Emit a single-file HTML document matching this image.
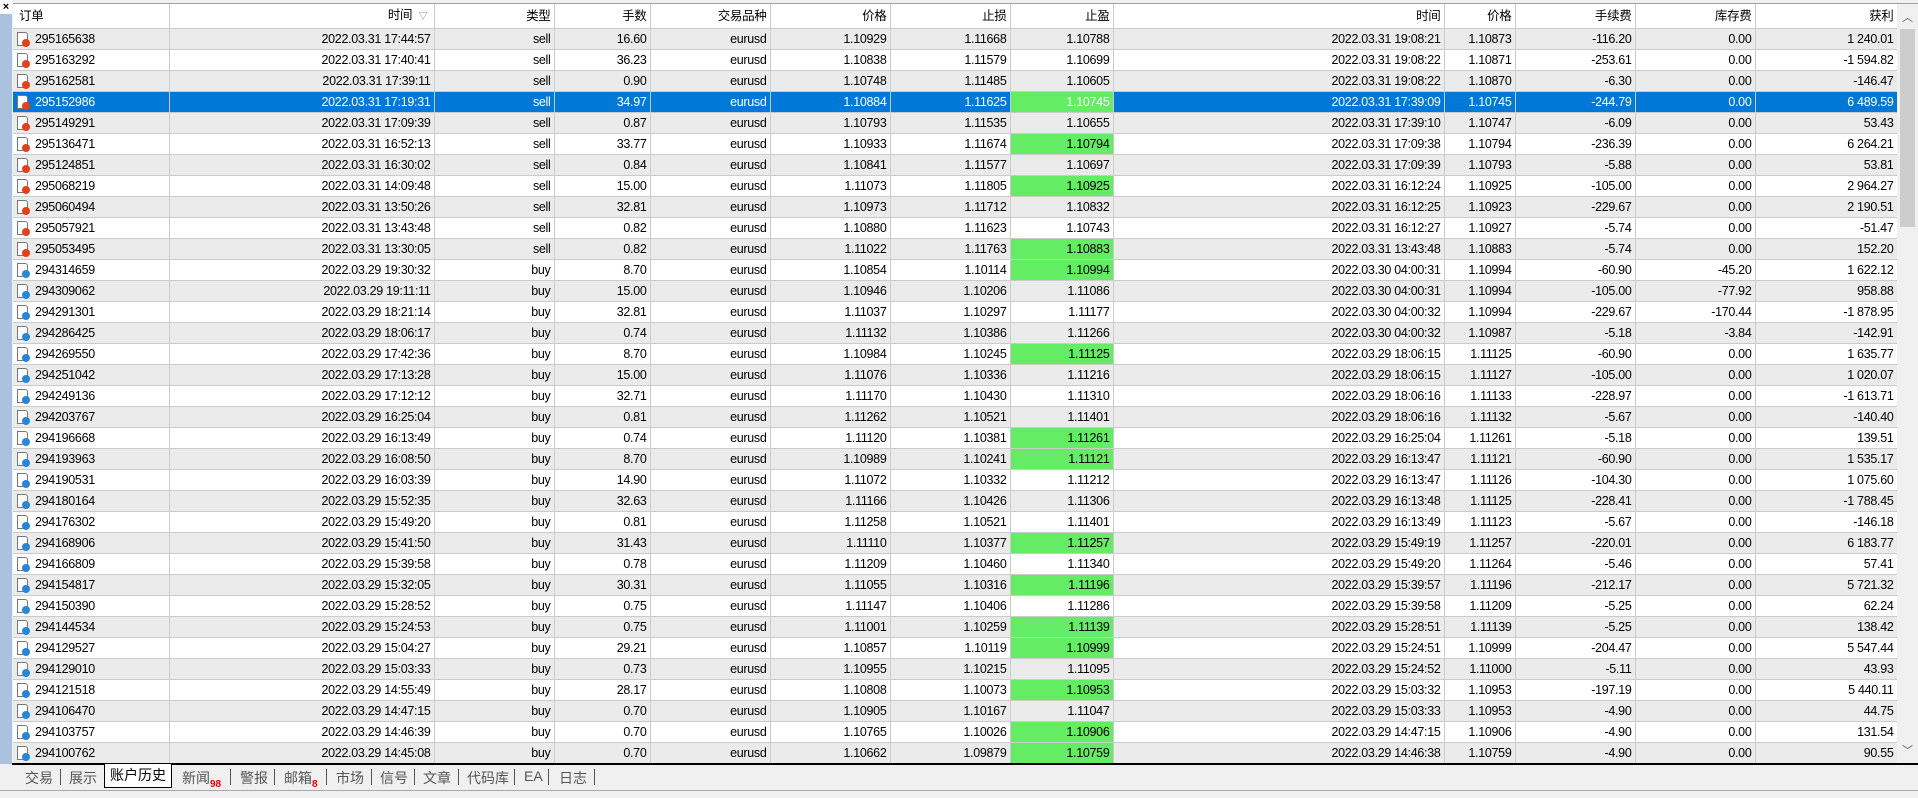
<!DOCTYPE html>
<html><head><meta charset="utf-8"><style>
*{margin:0;padding:0;box-sizing:border-box}
body{width:1918px;height:798px;background:#f0f0f0;position:relative;overflow:hidden;font-family:"Liberation Sans","Noto Sans CJK SC",sans-serif;font-size:12.5px;letter-spacing:-0.3px;color:#000}
#strip{position:absolute;left:0;top:0;width:12px;height:764px;background:#abc2de}
#x{position:absolute;left:0;top:0;width:12px;height:14px;background:#fff;font-size:11px;font-weight:bold;text-align:center;line-height:14px;letter-spacing:0}
#wrap{position:absolute;left:13px;top:3px;width:1884px;height:761px;background:#fff;border-top:1px solid #a0a0a0;overflow:hidden}
table{border-collapse:collapse;table-layout:fixed;width:1884px}
td,th{height:21px;padding:0 3px 0 0;border-right:1px solid #cbcbcb;border-bottom:1px solid #cbcbcb;text-align:right;white-space:nowrap;overflow:hidden;font-weight:normal;line-height:20px}
th{height:24px;background:#fff;line-height:23px}
tr:nth-child(even) td{background:#ebebeb}
tr.sel td{background:#0078d7;color:#fff}
td.g{background:#64ec64!important;color:#000}
td.o{text-align:left;padding-left:22px;position:relative}
th.o{text-align:left;padding-left:6px}
td.o i{position:absolute;left:4px;top:3px;width:11px;height:14px;border:1px solid #777;background:#fff;border-radius:0 3px 0 0}
td.o i:after{content:"";position:absolute;left:4px;top:6px;width:8px;height:8px;border-radius:50%;background:#e4401c}
td.o i.b:after{background:#2a84d8}
#sb{position:absolute;left:1897px;top:3px;width:21px;height:761px;background:#f0f0f0;border-top:1px solid #a0a0a0}
#thumb{position:absolute;left:3px;top:25px;width:15px;height:198px;background:#cdcdcd}
#sb span{position:absolute;left:0;width:21px;text-align:center;font-size:11px;color:#555;letter-spacing:0}
#bl{position:absolute;left:12px;top:763px;width:1906px;height:2px;background:#000}
#tabs{position:absolute;left:0;top:765px;height:22px;width:1000px;font-size:14px;color:#555;letter-spacing:0;white-space:nowrap}
#tabs span{position:absolute;top:3px}
#tabs b{position:absolute;top:4px;width:1px;height:16px;background:#555}
#act{position:absolute;left:104px;top:-1px!important;width:68px;height:24px;border:1px solid #000;border-top:none;background:#fff;color:#000;text-align:center;line-height:22px}
#tabs sub{color:#e00;font-size:10px;font-weight:bold}
#line2{position:absolute;left:0;top:790px;width:1918px;height:1px;background:#a8a8a8}
</style></head><body>
<div id="strip"></div><div id="x">×</div>
<div id="wrap"><table>
<colgroup><col style="width:156px"><col style="width:265px"><col style="width:120px"><col style="width:96px"><col style="width:120px"><col style="width:120px"><col style="width:120px"><col style="width:103px"><col style="width:331px"><col style="width:71px"><col style="width:120px"><col style="width:120px"><col style="width:142px"></colgroup>
<tr><th class="o">订单</th><th>时间 &nbsp;<span style="font-size:9px;color:#777">▽</span>&nbsp;</th><th>类型</th><th>手数</th><th>交易品种</th><th>价格</th><th>止损</th><th>止盈</th><th>时间</th><th>价格</th><th>手续费</th><th>库存费</th><th>获利</th></tr>
<tr><td class="o"><i></i>295165638</td><td>2022.03.31 17:44:57</td><td>sell</td><td>16.60</td><td>eurusd</td><td>1.10929</td><td>1.11668</td><td>1.10788</td><td>2022.03.31 19:08:21</td><td>1.10873</td><td>-116.20</td><td>0.00</td><td>1 240.01</td></tr>
<tr><td class="o"><i></i>295163292</td><td>2022.03.31 17:40:41</td><td>sell</td><td>36.23</td><td>eurusd</td><td>1.10838</td><td>1.11579</td><td>1.10699</td><td>2022.03.31 19:08:22</td><td>1.10871</td><td>-253.61</td><td>0.00</td><td>-1 594.82</td></tr>
<tr><td class="o"><i></i>295162581</td><td>2022.03.31 17:39:11</td><td>sell</td><td>0.90</td><td>eurusd</td><td>1.10748</td><td>1.11485</td><td>1.10605</td><td>2022.03.31 19:08:22</td><td>1.10870</td><td>-6.30</td><td>0.00</td><td>-146.47</td></tr>
<tr class="sel"><td class="o"><i></i>295152986</td><td>2022.03.31 17:19:31</td><td>sell</td><td>34.97</td><td>eurusd</td><td>1.10884</td><td>1.11625</td><td class="g">1.10745</td><td>2022.03.31 17:39:09</td><td>1.10745</td><td>-244.79</td><td>0.00</td><td>6 489.59</td></tr>
<tr><td class="o"><i></i>295149291</td><td>2022.03.31 17:09:39</td><td>sell</td><td>0.87</td><td>eurusd</td><td>1.10793</td><td>1.11535</td><td>1.10655</td><td>2022.03.31 17:39:10</td><td>1.10747</td><td>-6.09</td><td>0.00</td><td>53.43</td></tr>
<tr><td class="o"><i></i>295136471</td><td>2022.03.31 16:52:13</td><td>sell</td><td>33.77</td><td>eurusd</td><td>1.10933</td><td>1.11674</td><td class="g">1.10794</td><td>2022.03.31 17:09:38</td><td>1.10794</td><td>-236.39</td><td>0.00</td><td>6 264.21</td></tr>
<tr><td class="o"><i></i>295124851</td><td>2022.03.31 16:30:02</td><td>sell</td><td>0.84</td><td>eurusd</td><td>1.10841</td><td>1.11577</td><td>1.10697</td><td>2022.03.31 17:09:39</td><td>1.10793</td><td>-5.88</td><td>0.00</td><td>53.81</td></tr>
<tr><td class="o"><i></i>295068219</td><td>2022.03.31 14:09:48</td><td>sell</td><td>15.00</td><td>eurusd</td><td>1.11073</td><td>1.11805</td><td class="g">1.10925</td><td>2022.03.31 16:12:24</td><td>1.10925</td><td>-105.00</td><td>0.00</td><td>2 964.27</td></tr>
<tr><td class="o"><i></i>295060494</td><td>2022.03.31 13:50:26</td><td>sell</td><td>32.81</td><td>eurusd</td><td>1.10973</td><td>1.11712</td><td>1.10832</td><td>2022.03.31 16:12:25</td><td>1.10923</td><td>-229.67</td><td>0.00</td><td>2 190.51</td></tr>
<tr><td class="o"><i></i>295057921</td><td>2022.03.31 13:43:48</td><td>sell</td><td>0.82</td><td>eurusd</td><td>1.10880</td><td>1.11623</td><td>1.10743</td><td>2022.03.31 16:12:27</td><td>1.10927</td><td>-5.74</td><td>0.00</td><td>-51.47</td></tr>
<tr><td class="o"><i></i>295053495</td><td>2022.03.31 13:30:05</td><td>sell</td><td>0.82</td><td>eurusd</td><td>1.11022</td><td>1.11763</td><td class="g">1.10883</td><td>2022.03.31 13:43:48</td><td>1.10883</td><td>-5.74</td><td>0.00</td><td>152.20</td></tr>
<tr><td class="o"><i class="b"></i>294314659</td><td>2022.03.29 19:30:32</td><td>buy</td><td>8.70</td><td>eurusd</td><td>1.10854</td><td>1.10114</td><td class="g">1.10994</td><td>2022.03.30 04:00:31</td><td>1.10994</td><td>-60.90</td><td>-45.20</td><td>1 622.12</td></tr>
<tr><td class="o"><i class="b"></i>294309062</td><td>2022.03.29 19:11:11</td><td>buy</td><td>15.00</td><td>eurusd</td><td>1.10946</td><td>1.10206</td><td>1.11086</td><td>2022.03.30 04:00:31</td><td>1.10994</td><td>-105.00</td><td>-77.92</td><td>958.88</td></tr>
<tr><td class="o"><i class="b"></i>294291301</td><td>2022.03.29 18:21:14</td><td>buy</td><td>32.81</td><td>eurusd</td><td>1.11037</td><td>1.10297</td><td>1.11177</td><td>2022.03.30 04:00:32</td><td>1.10994</td><td>-229.67</td><td>-170.44</td><td>-1 878.95</td></tr>
<tr><td class="o"><i class="b"></i>294286425</td><td>2022.03.29 18:06:17</td><td>buy</td><td>0.74</td><td>eurusd</td><td>1.11132</td><td>1.10386</td><td>1.11266</td><td>2022.03.30 04:00:32</td><td>1.10987</td><td>-5.18</td><td>-3.84</td><td>-142.91</td></tr>
<tr><td class="o"><i class="b"></i>294269550</td><td>2022.03.29 17:42:36</td><td>buy</td><td>8.70</td><td>eurusd</td><td>1.10984</td><td>1.10245</td><td class="g">1.11125</td><td>2022.03.29 18:06:15</td><td>1.11125</td><td>-60.90</td><td>0.00</td><td>1 635.77</td></tr>
<tr><td class="o"><i class="b"></i>294251042</td><td>2022.03.29 17:13:28</td><td>buy</td><td>15.00</td><td>eurusd</td><td>1.11076</td><td>1.10336</td><td>1.11216</td><td>2022.03.29 18:06:15</td><td>1.11127</td><td>-105.00</td><td>0.00</td><td>1 020.07</td></tr>
<tr><td class="o"><i class="b"></i>294249136</td><td>2022.03.29 17:12:12</td><td>buy</td><td>32.71</td><td>eurusd</td><td>1.11170</td><td>1.10430</td><td>1.11310</td><td>2022.03.29 18:06:16</td><td>1.11133</td><td>-228.97</td><td>0.00</td><td>-1 613.71</td></tr>
<tr><td class="o"><i class="b"></i>294203767</td><td>2022.03.29 16:25:04</td><td>buy</td><td>0.81</td><td>eurusd</td><td>1.11262</td><td>1.10521</td><td>1.11401</td><td>2022.03.29 18:06:16</td><td>1.11132</td><td>-5.67</td><td>0.00</td><td>-140.40</td></tr>
<tr><td class="o"><i class="b"></i>294196668</td><td>2022.03.29 16:13:49</td><td>buy</td><td>0.74</td><td>eurusd</td><td>1.11120</td><td>1.10381</td><td class="g">1.11261</td><td>2022.03.29 16:25:04</td><td>1.11261</td><td>-5.18</td><td>0.00</td><td>139.51</td></tr>
<tr><td class="o"><i class="b"></i>294193963</td><td>2022.03.29 16:08:50</td><td>buy</td><td>8.70</td><td>eurusd</td><td>1.10989</td><td>1.10241</td><td class="g">1.11121</td><td>2022.03.29 16:13:47</td><td>1.11121</td><td>-60.90</td><td>0.00</td><td>1 535.17</td></tr>
<tr><td class="o"><i class="b"></i>294190531</td><td>2022.03.29 16:03:39</td><td>buy</td><td>14.90</td><td>eurusd</td><td>1.11072</td><td>1.10332</td><td>1.11212</td><td>2022.03.29 16:13:47</td><td>1.11126</td><td>-104.30</td><td>0.00</td><td>1 075.60</td></tr>
<tr><td class="o"><i class="b"></i>294180164</td><td>2022.03.29 15:52:35</td><td>buy</td><td>32.63</td><td>eurusd</td><td>1.11166</td><td>1.10426</td><td>1.11306</td><td>2022.03.29 16:13:48</td><td>1.11125</td><td>-228.41</td><td>0.00</td><td>-1 788.45</td></tr>
<tr><td class="o"><i class="b"></i>294176302</td><td>2022.03.29 15:49:20</td><td>buy</td><td>0.81</td><td>eurusd</td><td>1.11258</td><td>1.10521</td><td>1.11401</td><td>2022.03.29 16:13:49</td><td>1.11123</td><td>-5.67</td><td>0.00</td><td>-146.18</td></tr>
<tr><td class="o"><i class="b"></i>294168906</td><td>2022.03.29 15:41:50</td><td>buy</td><td>31.43</td><td>eurusd</td><td>1.11110</td><td>1.10377</td><td class="g">1.11257</td><td>2022.03.29 15:49:19</td><td>1.11257</td><td>-220.01</td><td>0.00</td><td>6 183.77</td></tr>
<tr><td class="o"><i class="b"></i>294166809</td><td>2022.03.29 15:39:58</td><td>buy</td><td>0.78</td><td>eurusd</td><td>1.11209</td><td>1.10460</td><td>1.11340</td><td>2022.03.29 15:49:20</td><td>1.11264</td><td>-5.46</td><td>0.00</td><td>57.41</td></tr>
<tr><td class="o"><i class="b"></i>294154817</td><td>2022.03.29 15:32:05</td><td>buy</td><td>30.31</td><td>eurusd</td><td>1.11055</td><td>1.10316</td><td class="g">1.11196</td><td>2022.03.29 15:39:57</td><td>1.11196</td><td>-212.17</td><td>0.00</td><td>5 721.32</td></tr>
<tr><td class="o"><i class="b"></i>294150390</td><td>2022.03.29 15:28:52</td><td>buy</td><td>0.75</td><td>eurusd</td><td>1.11147</td><td>1.10406</td><td>1.11286</td><td>2022.03.29 15:39:58</td><td>1.11209</td><td>-5.25</td><td>0.00</td><td>62.24</td></tr>
<tr><td class="o"><i class="b"></i>294144534</td><td>2022.03.29 15:24:53</td><td>buy</td><td>0.75</td><td>eurusd</td><td>1.11001</td><td>1.10259</td><td class="g">1.11139</td><td>2022.03.29 15:28:51</td><td>1.11139</td><td>-5.25</td><td>0.00</td><td>138.42</td></tr>
<tr><td class="o"><i class="b"></i>294129527</td><td>2022.03.29 15:04:27</td><td>buy</td><td>29.21</td><td>eurusd</td><td>1.10857</td><td>1.10119</td><td class="g">1.10999</td><td>2022.03.29 15:24:51</td><td>1.10999</td><td>-204.47</td><td>0.00</td><td>5 547.44</td></tr>
<tr><td class="o"><i class="b"></i>294129010</td><td>2022.03.29 15:03:33</td><td>buy</td><td>0.73</td><td>eurusd</td><td>1.10955</td><td>1.10215</td><td>1.11095</td><td>2022.03.29 15:24:52</td><td>1.11000</td><td>-5.11</td><td>0.00</td><td>43.93</td></tr>
<tr><td class="o"><i class="b"></i>294121518</td><td>2022.03.29 14:55:49</td><td>buy</td><td>28.17</td><td>eurusd</td><td>1.10808</td><td>1.10073</td><td class="g">1.10953</td><td>2022.03.29 15:03:32</td><td>1.10953</td><td>-197.19</td><td>0.00</td><td>5 440.11</td></tr>
<tr><td class="o"><i class="b"></i>294106470</td><td>2022.03.29 14:47:15</td><td>buy</td><td>0.70</td><td>eurusd</td><td>1.10905</td><td>1.10167</td><td>1.11047</td><td>2022.03.29 15:03:33</td><td>1.10953</td><td>-4.90</td><td>0.00</td><td>44.75</td></tr>
<tr><td class="o"><i class="b"></i>294103757</td><td>2022.03.29 14:46:39</td><td>buy</td><td>0.70</td><td>eurusd</td><td>1.10765</td><td>1.10026</td><td class="g">1.10906</td><td>2022.03.29 14:47:15</td><td>1.10906</td><td>-4.90</td><td>0.00</td><td>131.54</td></tr>
<tr><td class="o"><i class="b"></i>294100762</td><td>2022.03.29 14:45:08</td><td>buy</td><td>0.70</td><td>eurusd</td><td>1.10662</td><td>1.09879</td><td class="g">1.10759</td><td>2022.03.29 14:46:38</td><td>1.10759</td><td>-4.90</td><td>0.00</td><td>90.55</td></tr>
</table></div>
<div id="sb"><span style="top:5px">︿</span><div id="thumb"></div><span style="top:738px">﹀</span></div>
<div id="bl"></div>
<div id="tabs">
<span style="left:25px">交易</span><b style="left:60px"></b>
<span style="left:69px">展示</span>
<span id="act">账户历史</span>
<span style="left:182px">新闻<sub>98</sub></span><b style="left:230px"></b>
<span style="left:240px">警报</span><b style="left:274px"></b>
<span style="left:284px">邮箱<sub>8</sub></span><b style="left:326px"></b>
<span style="left:336px">市场</span><b style="left:371px"></b>
<span style="left:380px">信号</span><b style="left:414px"></b>
<span style="left:423px">文章</span><b style="left:458px"></b>
<span style="left:467px">代码库</span><b style="left:514px"></b>
<span style="left:524px">EA</span><b style="left:548px"></b>
<span style="left:559px">日志</span><b style="left:594px"></b>
</div>
<div id="line2"></div>
</body></html>
